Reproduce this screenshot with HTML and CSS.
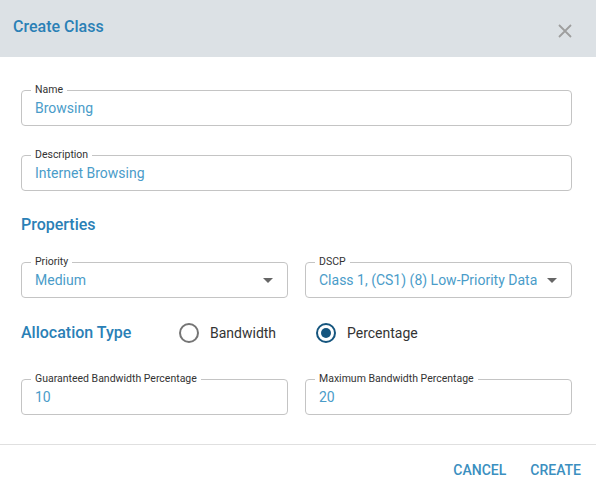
FILE: index.html
```html
<!DOCTYPE html>
<html lang="en">

<head>
  <meta charset="UTF-8" />
  <meta name="viewport" content="width=device-width, initial-scale=1.0" />
  <title>Create Class</title>
  <link rel="stylesheet" href="styles.css">
</head>

<body>
  <div class="dialog">
    <div class="dialog-header">
      <h2>Create Class</h2>
      <button class="close-btn" aria-label="Close">
        <svg width="14" height="14" viewBox="0 0 14 14">
          <path d="M1 1 L13 13 M13 1 L1 13" stroke="#9e9e9e" stroke-width="1.8" fill="none" />
        </svg>
      </button>
    </div>

    <div class="dialog-body">
      <!-- Name / Description -->
      <fieldset class="field">
        <legend>Name</legend>
        <div class="field-value">Browsing</div>
      </fieldset>
      <fieldset class="field field-gap">
        <legend>Description</legend>
        <div class="field-value">Internet Browsing</div>
      </fieldset>

      <h3 class="section-title">Properties</h3>
      <div class="row">
        <fieldset class="field">
          <legend>Priority</legend>
          <div class="field-value select">Medium<span class="arrow"></span></div>
        </fieldset>
        <fieldset class="field">
          <legend>DSCP</legend>
          <div class="field-value select">Class 1, (CS1) (8) Low-Priority Data<span class="arrow"></span></div>
        </fieldset>
      </div>

      <!-- Allocation -->
      <div class="allocation">
        <h3 class="section-title inline">Allocation Type</h3>
        <label class="radio"><span class="radio-icon"></span>Bandwidth</label>
        <label class="radio checked"><span class="radio-icon"></span>Percentage</label>
      </div>

      <div class="row row-gap">
        <fieldset class="field">
          <legend>Guaranteed Bandwidth Percentage</legend>
          <div class="field-value">10</div>
        </fieldset>
        <fieldset class="field">
          <legend>Maximum Bandwidth Percentage</legend>
          <div class="field-value">20</div>
        </fieldset>
      </div>
    </div>

    <div class="dialog-footer">
      <button class="text-btn">Cancel</button>
      <button class="text-btn">Create</button>
    </div>
  </div>
</body>

</html>
```

FILE: styles.css
```css
body {
  margin: 0;
  font-family: Roboto, "Liberation Sans", Arial, sans-serif;
  background: white;
  color: #333;
}

.dialog {
  width: 596px;
}

.dialog-header {
  height: 57px;
  background: #dce1e5;
  display: flex;
  align-items: flex-start;
  justify-content: space-between;
  padding: 0 24px 0 13px;
  box-sizing: border-box;
}

.dialog-header h2 {
  margin: 17px 0 0;
  font-size: 16px;
  line-height: 20px;
  font-weight: 500;
  color: #2a80b6;
}

.close-btn {
  margin-top: 24px;
  padding: 0;
  border: none;
  background: none;
  width: 14px;
  height: 14px;
  cursor: pointer;
}

.close-btn svg {
  display: block;
}

.dialog-body {
  padding: 27px 24px 0 21px;
}

.field {
  margin: 0;
  min-width: 0;
  border: 1px solid #c4c4c4;
  border-radius: 4px;
  padding: 0 13px;
}

.field legend {
  font-size: 10.5px;
  line-height: 12px;
  padding: 0 4px;
  margin-left: -4px;
  color: #333;
}

.field-gap {
  margin-top: 23px;
}

.field-value {
  padding: 2px 0 7px;
  font-size: 14px;
  line-height: 20px;
  color: #4a9cc9;
  white-space: nowrap;
}

.select {
  display: flex;
  align-items: center;
  justify-content: space-between;
}

.arrow {
  width: 0;
  height: 0;
  border-left: 5px solid transparent;
  border-right: 5px solid transparent;
  border-top: 5px solid #666;
  margin-right: 1px;
}

.section-title {
  margin: 24px 0 21px;
  font-size: 16px;
  line-height: 20px;
  font-weight: 500;
  color: #2a80b6;
}

.row {
  display: grid;
  grid-template-columns: 1fr 1fr;
  gap: 17px;
}

.row-gap {
  margin-top: 21px;
}

.allocation {
  display: flex;
  align-items: center;
  height: 38px;
  margin-top: 16px;
}

.section-title.inline {
  margin: 0;
  width: 147px;
}

.radio {
  display: flex;
  align-items: center;
  font-size: 14px;
  color: #333;
  cursor: pointer;
}

.radio:first-of-type {
  width: 137px;
}

.radio-icon {
  width: 20px;
  height: 20px;
  margin: 9px 11px 9px 11px;
  border: 2px solid #757575;
  border-radius: 50%;
  box-sizing: border-box;
  display: flex;
  align-items: center;
  justify-content: center;
}

.radio.checked .radio-icon {
  border-color: #15557e;
}

.radio.checked .radio-icon::after {
  content: "";
  width: 10px;
  height: 10px;
  border-radius: 50%;
  background: #15557e;
}

.dialog-footer {
  margin-top: 29px;
  border-top: 1px solid #e0e0e0;
  height: 49px;
  display: flex;
  align-items: center;
  justify-content: flex-end;
  gap: 8px;
  padding-right: 7px;
}

.text-btn {
  border: none;
  background: none;
  font-family: inherit;
  font-size: 14px;
  font-weight: 500;
  text-transform: uppercase;
  color: #3b8fc0;
  padding: 6px 8px;
  cursor: pointer;
}
```
